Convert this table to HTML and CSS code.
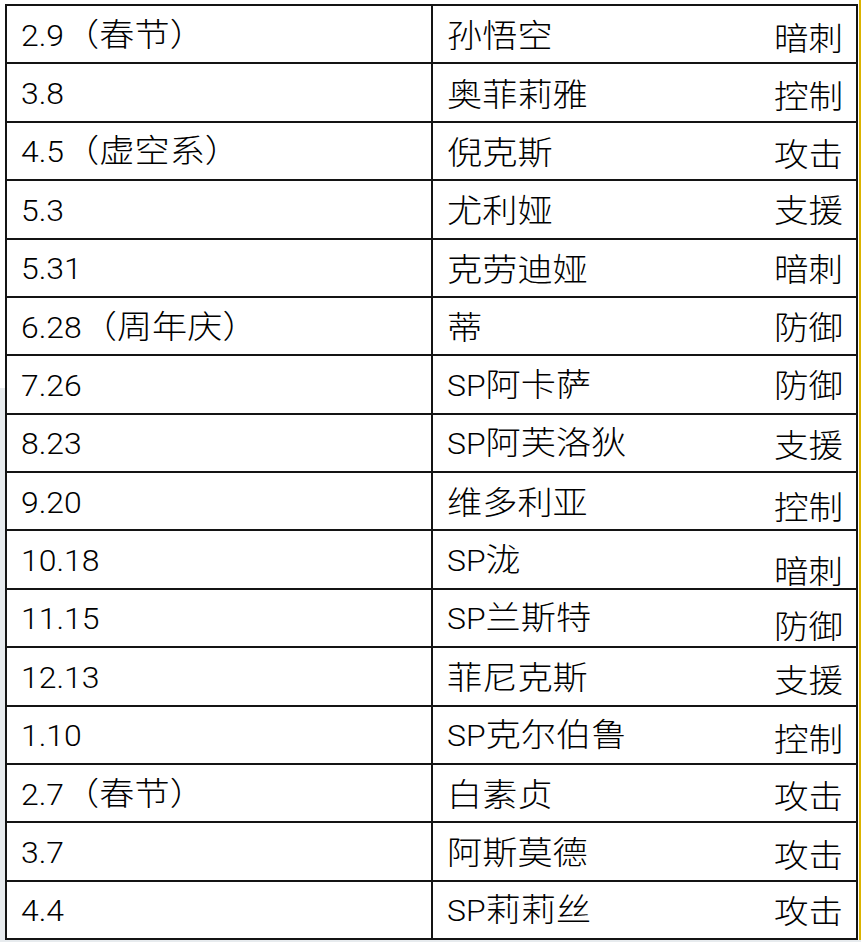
FILE: index.html
```html
<!DOCTYPE html>
<html lang="zh-CN">
<head>
<meta charset="utf-8">
<title>时间表</title>
<link rel="stylesheet" href="styles.css">
</head>
<body>
<div class="page">
  <div class="sheet">
    <div class="cell date"><span class="tx"><span class="n">2.9</span>（春节）</span></div>
    <div class="cell info"><span class="tx">孙悟空</span><span class="role d3">暗刺</span></div>

    <div class="cell date"><span class="tx"><span class="n">3.8</span></span></div>
    <div class="cell info"><span class="tx">奥菲莉雅</span><span class="role d2">控制</span></div>

    <div class="cell date"><span class="tx"><span class="n">4.5</span>（虚空系）</span></div>
    <div class="cell info"><span class="tx">倪克斯</span><span class="role d2">攻击</span></div>

    <div class="cell date"><span class="tx"><span class="n">5.3</span></span></div>
    <div class="cell info"><span class="tx">尤利娅</span><span class="role">支援</span></div>

    <div class="cell date"><span class="tx"><span class="n">5.31</span></span></div>
    <div class="cell info"><span class="tx">克劳迪娅</span><span class="role">暗刺</span></div>

    <div class="cell date"><span class="tx"><span class="n">6.28</span>（周年庆）</span></div>
    <div class="cell info"><span class="tx">蒂</span><span class="role">防御</span></div>

    <div class="cell date"><span class="tx"><span class="n">7.26</span></span></div>
    <div class="cell info"><span class="tx"><span class="n">SP</span>阿卡萨</span><span class="role">防御</span></div>

    <div class="cell date"><span class="tx"><span class="n">8.23</span></span></div>
    <div class="cell info"><span class="tx"><span class="n">SP</span>阿芙洛狄</span><span class="role d1">支援</span></div>

    <div class="cell date"><span class="tx"><span class="n">9.20</span></span></div>
    <div class="cell info"><span class="tx">维多利亚</span><span class="role d5">控制</span></div>

    <div class="cell date"><span class="tx"><span class="n">10.18</span></span></div>
    <div class="cell info"><span class="tx"><span class="n">SP</span>泷</span><span class="role d10">暗刺</span></div>

    <div class="cell date"><span class="tx"><span class="n">11.15</span></span></div>
    <div class="cell info"><span class="tx"><span class="n">SP</span>兰斯特</span><span class="role d7">防御</span></div>

    <div class="cell date"><span class="tx"><span class="n">12.13</span></span></div>
    <div class="cell info"><span class="tx">菲尼克斯</span><span class="role d3">支援</span></div>

    <div class="cell date"><span class="tx"><span class="n">1.10</span></span></div>
    <div class="cell info"><span class="tx"><span class="n">SP</span>克尔伯鲁</span><span class="role d3">控制</span></div>

    <div class="cell date"><span class="tx"><span class="n">2.7</span>（春节）</span></div>
    <div class="cell info"><span class="tx">白素贞</span><span class="role d2">攻击</span></div>

    <div class="cell date"><span class="tx"><span class="n">3.7</span></span></div>
    <div class="cell info"><span class="tx">阿斯莫德</span><span class="role d3">攻击</span></div>

    <div class="cell date"><span class="tx"><span class="n">4.4</span></span></div>
    <div class="cell info"><span class="tx"><span class="n">SP</span>莉莉丝</span><span class="role">攻击</span></div>
  </div>
  <div class="strip-left"></div>
  <div class="strip-bottom"></div>
  <div class="strip-right"></div>
</div>
</body>
</html>
```

FILE: styles.css
```css
html, body {
  margin: 0;
  padding: 0;
  background: #ffffff;
}

.page {
  position: relative;
  width: 861px;
  height: 942px;
  overflow: hidden;
  background: #ffffff;
}

.sheet {
  display: grid;
  grid-template-columns: 426px 425px;
  grid-auto-rows: 58.375px;
  width: max-content;
  margin: 4px 0 0 5px;
  border-top: 2px solid #141414;
  border-left: 2px solid #141414;
  font-family: "Noto Sans CJK SC", "Liberation Sans", sans-serif;
  font-weight: 300;
  font-size: 32px;
  color: #000000;
}

.cell {
  box-sizing: border-box;
  border-right: 2px solid #141414;
  border-bottom: 2px solid #141414;
  display: flex;
  align-items: center;
  padding: 0 13px 2px 14px;
  line-height: 1;
  white-space: nowrap;
}

.info {
  justify-content: space-between;
}

.tx {
  display: inline-block;
  transform: scaleX(1.1);
  transform-origin: left center;
}

.n {
  font-family: "Roboto", "Liberation Sans", sans-serif;
  font-weight: 300;
  font-size: 29px;
}

.role {
  display: inline-block;
  transform: scaleX(1.08);
  transform-origin: right center;
}

.d1 { margin-top: 2px; }
.d2 { margin-top: 4px; }
.d3 { margin-top: 6px; }
.d5 { margin-top: 10px; }
.d7 { margin-top: 14px; }
.d10 { margin-top: 20px; }

.strip-left {
  position: absolute;
  left: 0;
  top: 388px;
  width: 5px;
  bottom: 0;
  background: #e7ebee;
}

.strip-bottom {
  position: absolute;
  left: 0;
  right: 0;
  top: 940px;
  bottom: 0;
  background: #e7ebee;
}

.strip-right {
  position: absolute;
  left: 859px;
  width: 2px;
  top: 0;
  height: 940px;
  background: #dcb400;
}
```
